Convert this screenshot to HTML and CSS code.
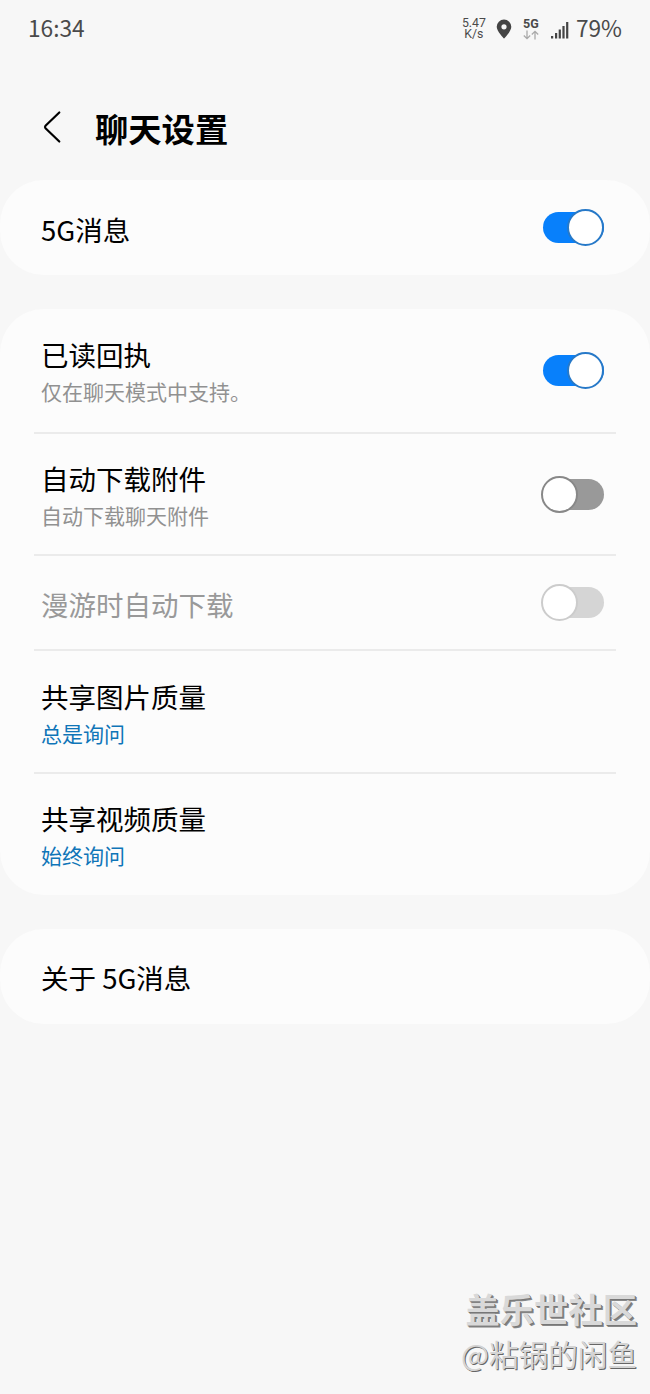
FILE: index.html
```html
<!DOCTYPE html>
<html lang="zh-CN">
  <head>
    <meta charset="UTF-8" />
    <meta name="viewport" content="width=device-width, initial-scale=1.0" />
    <title>聊天设置</title>
    <link rel="stylesheet" href="styles.css">
  </head>

  <body>
    <div class="status-bar">
      <span class="time">16:34</span>
      <div class="speed">
        <span>5.47</span>
        <span>K/s</span>
      </div>
      <svg class="pin" width="16" height="20" viewBox="0 0 16 20">
        <path fill="#444" fill-rule="evenodd" d="M8 .5a7.3 7.3 0 0 0-7.3 7.3C.7 12.5 8 19.500 8 19.500s7.300-7 7.300-11.700A7.300 7.300 0 0 0 8 .5zm0 4.700a2.600 2.600 0 1 1 0 5.200 2.600 2.600 0 0 1 0-5.200z" />
      </svg>
      <div class="network">
        <b>5G</b>
        <svg width="16" height="10" viewBox="0 0 16 10" fill="none" stroke="#aaa" stroke-width="1.3">
          <path d="M4 .5v8M.8 5.500L4 8.700l3.200-3.200M12 9.500v-8M8.800 4.500L12 1.300l3.200 3.200" />
        </svg>
      </div>
      <svg class="signal" width="18" height="18" viewBox="0 0 18 18" fill="#444">
        <rect x="0" y="15" width="2.200" height="2.500" />
        <rect x="4" y="12" width="2.200" height="5.500" />
        <rect x="7.700" y="8.500" width="2.200" height="9" />
        <rect x="11.400" y="5" width="2.200" height="12.500" />
        <rect x="15.100" y="1" width="2.200" height="16.500" />
      </svg>
      <span class="battery">79%</span>
    </div>

    <header>
      <svg class="back" width="20" height="34" viewBox="0 0 20 34" fill="none" stroke="#000" stroke-width="2.200" stroke-linecap="round" stroke-linejoin="round">
        <path d="M17.300 2.500L3.500 15.800q-1 1.200 0 2.400L17.300 31.500" />
      </svg>
      <h1>聊天设置</h1>
    </header>

    <main>
      <section class="card">
        <div class="row single">
          <p class="title">5G消息</p>
          <div class="switch on"></div>
        </div>
      </section>

      <section class="card">
        <div class="row">
          <div class="text">
            <p class="title">已读回执</p>
            <p class="sub">仅在聊天模式中支持。</p>
          </div>
          <div class="switch on"></div>
        </div>
        <div class="row">
          <div class="text">
            <p class="title">自动下载附件</p>
            <p class="sub">自动下载聊天附件</p>
          </div>
          <div class="switch"></div>
        </div>
        <div class="row single disabled">
          <p class="title">漫游时自动下载</p>
          <div class="switch"></div>
        </div>
        <div class="row">
          <div class="text">
            <p class="title">共享图片质量</p>
            <p class="sub link">总是询问</p>
          </div>
        </div>
        <div class="row">
          <div class="text">
            <p class="title">共享视频质量</p>
            <p class="sub link">始终询问</p>
          </div>
        </div>
      </section>

      <section class="card">
        <div class="row single">
          <p class="title">关于 5G消息</p>
        </div>
      </section>
    </main>

    <footer>
      <p class="community">盖乐世社区</p>
      <p class="author">@粘锅的闲鱼</p>
    </footer>
  </body>
</html>
```
FILE: styles.css
```css
*,
*::after {
  box-sizing: border-box;
}

body {
  display: flex;
  flex-direction: column;
  height: 1394px;
  margin: 0;
  background: #f7f7f7;
  color: #000;
  font-family: "Noto Sans CJK SC", sans-serif;
}

p,
h1 {
  margin: 0;
}

.status-bar {
  display: flex;
  align-items: center;
  height: 58px;
  padding: 0 28px;
  color: #4a4a4a;
  font-size: 22.7px;
}

.time,
.battery {
  padding-bottom: 3px;
}

.time {
  margin-right: auto;
}

.speed {
  display: flex;
  flex-direction: column;
  align-items: center;
  width: 26px;
  font-family: Roboto, sans-serif;
  font-size: 12.300px;
  line-height: 11px;
}

.pin {
  margin-left: 9px;
}

.network {
  display: flex;
  flex-direction: column;
  align-items: center;
  width: 18px;
  margin-left: 10px;
  font-family: Roboto, sans-serif;
  font-size: 12.500px;
  line-height: 12px;
}

.signal {
  margin: 2px 7px 0 11px;
}

header {
  display: flex;
  align-items: center;
  height: 122px;
  padding: 26px 0 0 42px;
}

.back {
  margin-right: 33px;
  margin-bottom: 11px;
}

h1 {
  margin-bottom: 8px;
  font-size: 33.3px;
  font-weight: 700;
  line-height: 48px;
}

main {
  display: flex;
  flex-direction: column;
  gap: 34px;
}

.card {
  padding: 0 34px;
  border-radius: 44px;
  background: #fcfcfc;
}

.row {
  display: flex;
  align-items: center;
  justify-content: space-between;
  height: 122.700px;
  padding: 0 12px 0 7px;
}

.row + .row {
  border-top: 2px solid #ebebeb;
}

.row.single {
  height: 95px;
}

.text,
.single .title {
  padding-top: 2px;
}

.title {
  font-size: 27.5px;
  line-height: 40px;
}

.sub {
  color: #919191;
  font-size: 21px;
  line-height: 34px;
}

.link {
  color: #0f75b8;
}

.disabled .title {
  color: #999;
}

/* the thumb is larger than the track and hangs over its edge */
.switch {
  position: relative;
  width: 61px;
  height: 31px;
  border-radius: 16px;
  background: #999;
}

.switch::after {
  content: "";
  position: absolute;
  top: -3px;
  left: -2px;
  width: 37px;
  height: 37px;
  border: 2px solid #888;
  border-radius: 50%;
  background: #fff;
}

.switch.on {
  background: #0880fb;
}

.switch.on::after {
  right: 0;
  left: auto;
  border-color: #2779c8;
}

.disabled .switch {
  background: #d5d5d5;
}

.disabled .switch::after {
  border-color: #ccc;
}

footer {
  margin-top: auto;
  padding: 0 13px 18px 0;
  color: #d9d9d9;
  text-align: right;
}

.community {
  font-size: 34.3px;
  font-weight: 700;
  line-height: 46px;
  text-shadow: 1px 1px 0 #777, 2px 2px 0 #888;
}

.author {
  color: #d4d4d4;
  font-size: 29.6px;
  line-height: 45px;
  text-shadow: 1px 1px 0 #666;
}
```
